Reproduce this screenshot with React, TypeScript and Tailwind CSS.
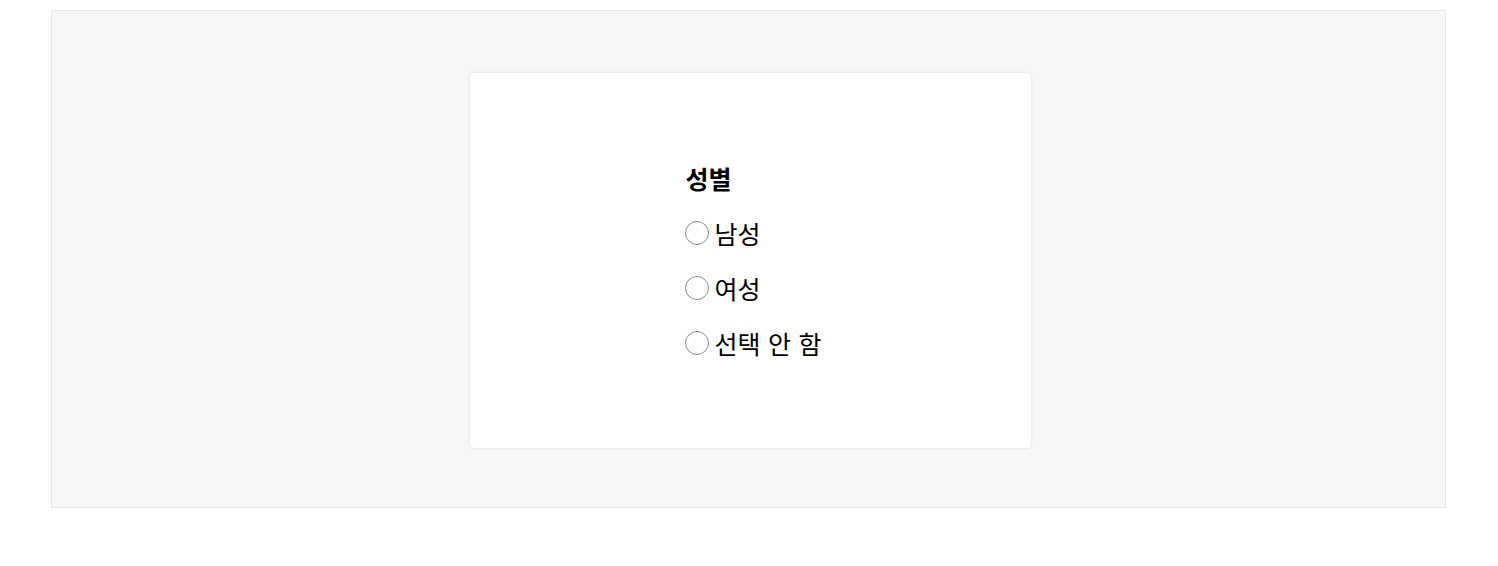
const options = ["남성", "여성", "선택 안 함"] as const

export default function App() {
  return (
    <div className="pt-[10px] pl-[51px] pr-[52px] font-['Noto_Sans_CJK_KR',sans-serif] text-black">
      <div className="flex h-[498px] items-center justify-center border border-[#e6e6e6] bg-[#f7f7f7]">
        <div className="ml-[4px] mt-[3px] flex h-[375px] w-[561px] items-center justify-center rounded-[4px] bg-white shadow-[0_0_3px_rgba(0,0,0,0.12)]">
          <div className="ml-[6px] flex flex-col">
            <h2 className="text-[25px] font-bold leading-[30px]">성별</h2>
            <div className="mt-[24px] flex flex-col gap-[23px]">
              {options.map((label) => (
                <label key={label} className="flex items-center gap-[5px] text-[25px] leading-[32px] [word-spacing:2px]">
                  <span className="h-[24px] w-[24px] rounded-full border border-[#8a8a8a] bg-white" />
                  {label}
                </label>
              ))}
            </div>
          </div>
        </div>
      </div>
    </div>
  )
}
